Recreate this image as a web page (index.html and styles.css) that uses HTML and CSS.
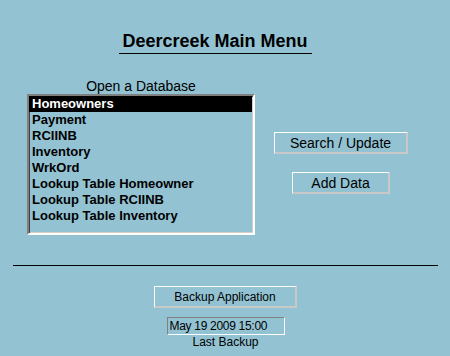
FILE: index.html
```html
<!DOCTYPE html>
<html>
    <head>
        <meta charset="utf-8">
        <title>Deercreek Main Menu</title>
        <link rel="stylesheet" href="styles.css">
    </head>
    <body>
        <div class="header">
            <h1 class="title">Deercreek Main Menu</h1>
        </div>

        <div class="main-row">
            <div class="db-column">
                <div class="db-label">Open a Database</div>
                <div class="db-list">
                    <div class="db-item selected">Homeowners</div>
                    <div class="db-item">Payment</div>
                    <div class="db-item">RCIINB</div>
                    <div class="db-item">Inventory</div>
                    <div class="db-item">WrkOrd</div>
                    <div class="db-item">Lookup Table Homeowner</div>
                    <div class="db-item">Lookup Table RCIINB</div>
                    <div class="db-item">Lookup Table Inventory</div>
                </div>
            </div>
            <div class="actions">
                <button class="btn btn-search">Search / Update</button>
                <button class="btn btn-add">Add Data</button>
            </div>
        </div>

        <div class="divider"></div>

        <div class="footer">
            <button class="btn btn-backup">Backup Application</button>
            <div class="date-field">May 19 2009 15:00</div>
            <div class="date-label">Last Backup</div>
        </div>
    </body>
</html>
```

FILE: styles.css
```css
* {
    font-family: "Liberation Sans", Arial, sans-serif;
    box-sizing: border-box;
}

body {
    background-color: #93c3d3;
    margin: 0px;
    padding: 0px;
    width: 450px;
    height: 356px;
    overflow: hidden;
    color: #000;
}

.header {
    display: flex;
    justify-content: center;
    padding-top: 31px;
    padding-right: 19px;
}

.title {
    margin: 0px;
    font-size: 18px;
    line-height: 21px;
    font-weight: bold;
    padding: 0px 4px 1px 3px;
    border-bottom: 1px solid #000;
}

.main-row {
    display: flex;
    flex-direction: row;
    margin-top: 25px;
    padding-left: 27px;
}

.db-column {
    display: flex;
    flex-direction: column;
    width: 228px;
}

.db-label {
    text-align: center;
    font-size: 14px;
    line-height: 15px;
}

.db-list {
    height: 141px;
    border: 2px solid;
    border-color: #808080 #ffffff #ffffff #808080;
    box-shadow: inset 1px 1px 0px #404040, inset -1px -1px 0px #d4d0c8;
    padding: 0px 1px 0px 0px;
}

.db-item {
    font-size: 13px;
    font-weight: bold;
    line-height: 16px;
    padding-left: 3px;
}

.db-item.selected {
    background-color: #000;
    color: #fff;
}

.actions {
    display: flex;
    flex-direction: column;
    align-items: center;
    width: 134px;
    margin-left: 19px;
    padding-top: 53px;
    gap: 18px;
}

.btn {
    background-color: transparent;
    color: #000;
    font-size: 14px;
    height: 22px;
    padding: 0px;
    border: 2px solid;
    border-top-width: 1px;
    border-left-width: 1px;
    border-color: #ffffff #c8c8c8 #c8c8c8 #ffffff;
}

.btn-search {
    width: 134px;
}

.btn-add {
    width: 98px;
}

.divider {
    margin: 30px 12px 0px 13px;
    border-top: 1px solid #000;
}

.footer {
    display: flex;
    flex-direction: column;
    align-items: center;
    padding-top: 20px;
    padding-left: 1px;
}

.btn-backup {
    width: 143px;
    font-size: 12px;
}

.date-field {
    width: 118px;
    height: 18px;
    margin-top: 9px;
    font-size: 12px;
    line-height: 16px;
    letter-spacing: -0.3px;
    white-space: nowrap;
    padding-left: 2px;
    border: 1px solid;
    border-color: #808080 #ffffff #ffffff #808080;
}

.date-label {
    font-size: 12px;
    line-height: 14px;
}
```
